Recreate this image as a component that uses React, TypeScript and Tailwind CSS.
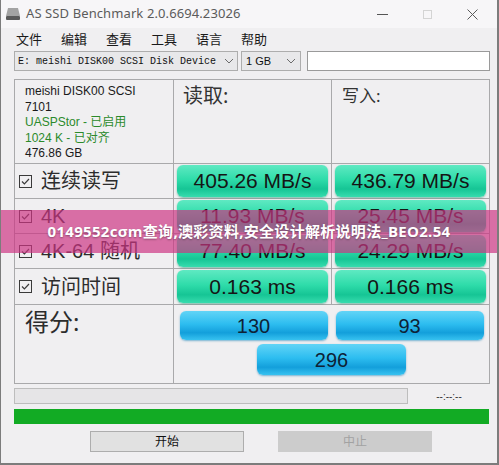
import type { ReactNode } from 'react'

const menus = ['文件', '编辑', '查看', '工具', '语言', '帮助']

const rows = [
  { label: '连续读写', read: '405.26 MB/s', write: '436.79 MB/s' },
  { label: '4K', read: '11.93 MB/s', write: '25.45 MB/s' },
  { label: '4K-64 随机', read: '77.40 MB/s', write: '24.29 MB/s' },
  { label: '访问时间', read: '0.163 ms', write: '0.166 ms' },
]

const cjk = "font-['Liberation_Sans','Noto_Sans_CJK_SC',sans-serif]"

function Chevron() {
  return (
    <svg width="10" height="6" viewBox="0 0 10 6" className="shrink-0">
      <path d="M1 1l4 4 4-4" fill="none" stroke="#6b6b6b" strokeWidth="1" />
    </svg>
  )
}

function CheckBox() {
  return (
    <svg width="13" height="13" viewBox="0 0 13 13" className="shrink-0">
      <rect x="0.5" y="0.5" width="12" height="12" fill="none" stroke="#3a3a3a" />
      <path d="M3 6.5l2.4 2.4L10 4" fill="none" stroke="#3a3a3a" strokeWidth="1.2" />
    </svg>
  )
}

// glossy result pill, green for speeds, blue for score
function Pill({ children, blue, className = '' }: { children: ReactNode; blue?: boolean; className?: string }) {
  return (
    <div
      className={`flex items-center justify-center rounded-[6px] ${cjk} ${
        blue
          ? 'bg-[linear-gradient(to_bottom,#62d4f6,#2dbdf0_45%,#139fdb_75%,#37c2f0)] text-[20px] text-[#0e2236] shadow-[0_1px_2px_rgba(0,120,180,0.5)]'
          : 'bg-[linear-gradient(to_bottom,#5fe9c2,#2fdcaa_45%,#16c595_75%,#37dcae)] text-[21px] text-[#151515] shadow-[0_1px_2px_rgba(0,140,100,0.5)]'
      } ${className}`}
    >
      {children}
    </div>
  )
}

export default function App() {
  return (
    <div className="relative w-[499px] h-[465px] overflow-hidden bg-[#f0eff1] border-l border-r-2 border-b-2 border-[#7c7c7c] font-['Noto_Sans','Noto_Sans_CJK_SC',sans-serif]">
      {/* Title bar */}
      <div className="flex items-center h-[28px] bg-[#f7f6f8]">
        <svg width="14" height="12" viewBox="0 0 14 12" className="ml-[5px]">
          <path d="M2 0h10l2 8H0z" fill="#a3a3a3" />
          <rect x="0" y="8" width="14" height="4" rx="1" fill="#5a5a5a" />
        </svg>
        <span className="ml-[6px] text-[13px] text-[#5b5b5b] tracking-[0.1px]">AS SSD Benchmark 2.0.6694.23026</span>
        <div className="ml-auto flex items-center mr-[19px] gap-[35px]">
          <div className="w-[11px] h-px bg-[#555]" />
          <div className="w-[9px] h-[9px] border border-[#d4d4d4]" />
          <svg width="11" height="11" viewBox="0 0 11 11">
            <path d="M0.5 0.5l10 10M10.5 0.5l-10 10" stroke="#5a5a5a" strokeWidth="1" />
          </svg>
        </div>
      </div>

      {/* Menu */}
      <div className="flex items-center h-[21px] mt-px pl-[15px] gap-[19px] text-[13px] text-[#1a1a1a]">
        {menus.map((m) => (
          <span key={m}>{m}</span>
        ))}
      </div>

      {/* Drive picker */}
      <div className="flex items-center h-[20px] mt-[1px] pl-[13px] gap-[3px]">
        <div className="flex items-center w-[224px] h-full px-[3px] bg-[#e8e8ea] border border-[#adadad]">
          <span className="flex-1 text-[10px] font-['Liberation_Mono',monospace] text-[#111] whitespace-nowrap">E: meishi DISK00 SCSI Disk Device</span>
          <Chevron />
        </div>
        <div className="flex items-center w-[60px] h-full px-[4px] bg-[#e8e8ea] border border-[#adadad]">
          <span className="flex-1 text-[11px] font-['Liberation_Sans',sans-serif] text-[#111]">1 GB</span>
          <Chevron />
        </div>
        <div className="w-[183px] h-full ml-[3px] bg-white border border-[#9a9a9a]" />
      </div>

      {/* Result table */}
      <div className="mt-[8px] ml-[13px] w-[476px] grid grid-cols-[158px_157px_157px] grid-rows-[83px_34px_34px_34px_35px_78px] gap-px p-px bg-[#a9a9ab]">
        <div className={`bg-[#f0eff1] pl-[10px] pt-[4px] text-[12px] leading-[15.5px] text-[#1a1a1a] ${cjk}`}>
          <div>meishi DISK00 SCSI</div>
          <div>7101</div>
          <div className="text-[#2b8a2b]">UASPStor - 已启用</div>
          <div className="text-[#2b8a2b]">1024 K - 已对齐</div>
          <div>476.86 GB</div>
        </div>
        <div className="bg-[#f0eff1] pl-[9px] pt-[1px] text-[20px] text-[#333]">读取:</div>
        <div className="bg-[#f0eff1] pl-[10px] pt-[3px] text-[17px] text-[#333]">写入:</div>

        {rows.map((r) => (
          <div key={r.label} className="contents">
            <div className={`flex items-center gap-[9px] pl-[4px] bg-[#f0eff1] text-[20px] text-[#2c2c2c] ${cjk}`}>
              <CheckBox />
              <span>{r.label}</span>
            </div>
            <div className="bg-[#f0eff1] px-[3px] py-[1px]">
              <Pill className="h-full">{r.read}</Pill>
            </div>
            <div className="bg-[#f0eff1] px-[3px] py-[1px]">
              <Pill className="h-full">{r.write}</Pill>
            </div>
          </div>
        ))}

        <div className="bg-[#f0eff1] pl-[10px] pt-[3px] text-[24px] leading-[28px] text-[#2c2c2c]">得分:</div>
        <div className="col-span-2 bg-[#f0eff1] pt-[6px] flex flex-col items-center gap-[4px]">
          <div className="flex gap-[8px]">
            <Pill blue className="w-[148px] h-[29px]">130</Pill>
            <Pill blue className="w-[148px] h-[29px]">93</Pill>
          </div>
          <Pill blue className="w-[149px] h-[31px]">296</Pill>
        </div>
      </div>

      {/* Progress */}
      <div className="flex items-center mt-[4px] ml-[13px] w-[476px] h-[16px]">
        <div className="w-[394px] h-full bg-[#e6e5e7] border border-[#bdbdbd]" />
        <span className="flex-1 text-center text-[10px] font-['Liberation_Sans',sans-serif] text-[#333]">--:--:--</span>
      </div>
      <div className="mt-[5px] ml-[13px] w-[475px] h-[15px] bg-[#12ab24]" />

      {/* Buttons */}
      <div className="flex mt-[7px] ml-[89px] gap-[34px] text-[12px]">
        <button className="w-[154px] h-[21px] bg-[#e1e1e1] border border-[#adadad] text-[#111]">开始</button>
        <button className="w-[154px] h-[21px] bg-[#cccccc] text-[#a2a2a2]">中止</button>
      </div>

      {/* Overlay banner */}
      <div className="absolute left-0 right-0 top-[210px] h-[43px] flex items-center justify-center bg-[rgba(204,52,131,0.69)]">
        <span className="text-[15px] font-bold text-white tracking-[0.3px] [text-shadow:0_1px_2px_rgba(0,0,0,0.35)] font-['Open_Sans','Noto_Sans_CJK_SC',sans-serif]">
          0149552cσm查询,澳彩资料,安全设计解析说明法_BEO2.54
        </span>
      </div>
    </div>
  )
}
